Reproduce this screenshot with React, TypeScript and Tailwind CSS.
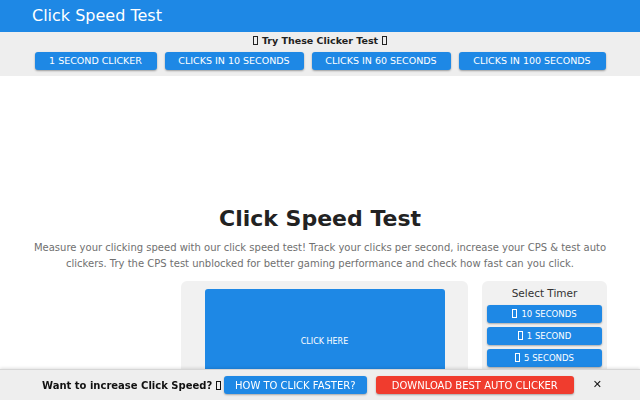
import React from "react";

const topLinks = ["1 Second Clicker", "Clicks in 10 Seconds", "Clicks in 60 Seconds", "Clicks in 100 Seconds"];
const timers = ["10 Seconds", "1 Second", "5 Seconds"];

// missing-glyph box, as the emoji shows up in the screenshot
const Tofu = ({ className = "" }: { className?: string }) => (
    <span className={`inline-block align-[-1px] w-[5px] h-[9px] border border-current ${className}`} />
);

const App = () => {
    return (
        <div className="min-h-[400px] bg-white font-['DejaVu_Sans',sans-serif] text-[#222]">
            <header className="h-8 bg-[#1e88e5] px-8 flex items-center">
                <span className="text-[16px] text-white leading-none">Click Speed Test</span>
            </header>

            <div className="h-11 bg-[#eeeeee] flex flex-col items-center pt-[2px]">
                <div className="text-[9.5px] font-bold leading-[13px]">
                    <Tofu className="mr-[4px]" />Try These Clicker Test<Tofu className="ml-[4px]" />
                </div>
                <div className="mt-[5px] flex gap-2">
                    {topLinks.map((t, i) => (
                        <a
                            key={t}
                            href="#"
                            className={`h-[18px] flex items-center justify-center rounded-[3px] bg-[#1e88e5] text-white text-[9.5px] uppercase shadow-[0_1px_2px_rgba(0,0,0,0.35)] ${i === 0 ? "w-[122px]" : i === 3 ? "w-[147px]" : "w-[139px]"}`}
                        >
                            {t}
                        </a>
                    ))}
                </div>
            </div>

            <main className="px-8 pt-[129px]">
                <h1 className="text-center text-[22px] font-bold leading-[28px] text-[#222]">Click Speed Test</h1>
                <p className="mt-[7px] text-center text-[10px] leading-4 text-[#707070]">
                    Measure your clicking speed with our click speed test! Track your clicks per second, increase your CPS &amp; test auto clickers. Try the CPS test unblocked for better gaming performance and check how fast can you click.
                </p>

                <div className="mt-[9px] flex gap-[14px] ml-[149px]">
                    <div className="w-[287px] h-[120px] rounded-t-md bg-[#f1f1f1] pt-[8px] flex justify-center">
                        <button className="w-[240px] h-[106px] rounded-[3px] bg-[#1e88e5] text-white text-[8px] uppercase flex items-center justify-center">
                            Click Here
                        </button>
                    </div>
                    <div className="w-[125px] h-[120px] rounded-t-md bg-[#f1f1f1] px-[5px] pt-[5px]">
                        <div className="text-center text-[10.5px] leading-[14px] text-[#333]">Select Timer</div>
                        <div className="mt-[5px] flex flex-col gap-[4px]">
                            {timers.map((t) => (
                                <button
                                    key={t}
                                    className="h-[18px] rounded-[3px] bg-[#1e88e5] text-white text-[8.5px] uppercase shadow-[0_1px_2px_rgba(0,0,0,0.3)]"
                                >
                                    <Tofu className="mr-[4px] w-[4px] h-[8px]" />
                                    {t}
                                </button>
                            ))}
                        </div>
                    </div>
                </div>
            </main>

            <div className="fixed bottom-0 left-0 right-0 h-[31px] bg-[#eeeeee] border-t border-[#d6d6d6] shadow-[0_-1px_3px_rgba(0,0,0,0.12)] flex items-center pl-[42px]">
                <span className="text-[10px] font-bold text-[#111]">
                    Want to increase Click Speed?<Tofu className="ml-[4px]" />
                </span>
                <a href="#" className="ml-auto w-[143px] h-[18px] rounded-[3px] bg-[#1e88e5] text-white text-[10px] uppercase flex items-center justify-center shadow-[0_1px_2px_rgba(0,0,0,0.3)]">
                    How to Click Faster?
                </a>
                <a href="#" className="ml-[9px] w-[198px] h-[18px] rounded-[3px] bg-[#f03c2e] text-white text-[10px] uppercase flex items-center justify-center shadow-[0_1px_2px_rgba(0,0,0,0.3)]">
                    Download Best Auto Clicker
                </a>
                <button className="ml-[19px] mr-[38px] text-[11px] font-bold text-[#111]">✕</button>
            </div>
        </div>
    );
};

export default App;
